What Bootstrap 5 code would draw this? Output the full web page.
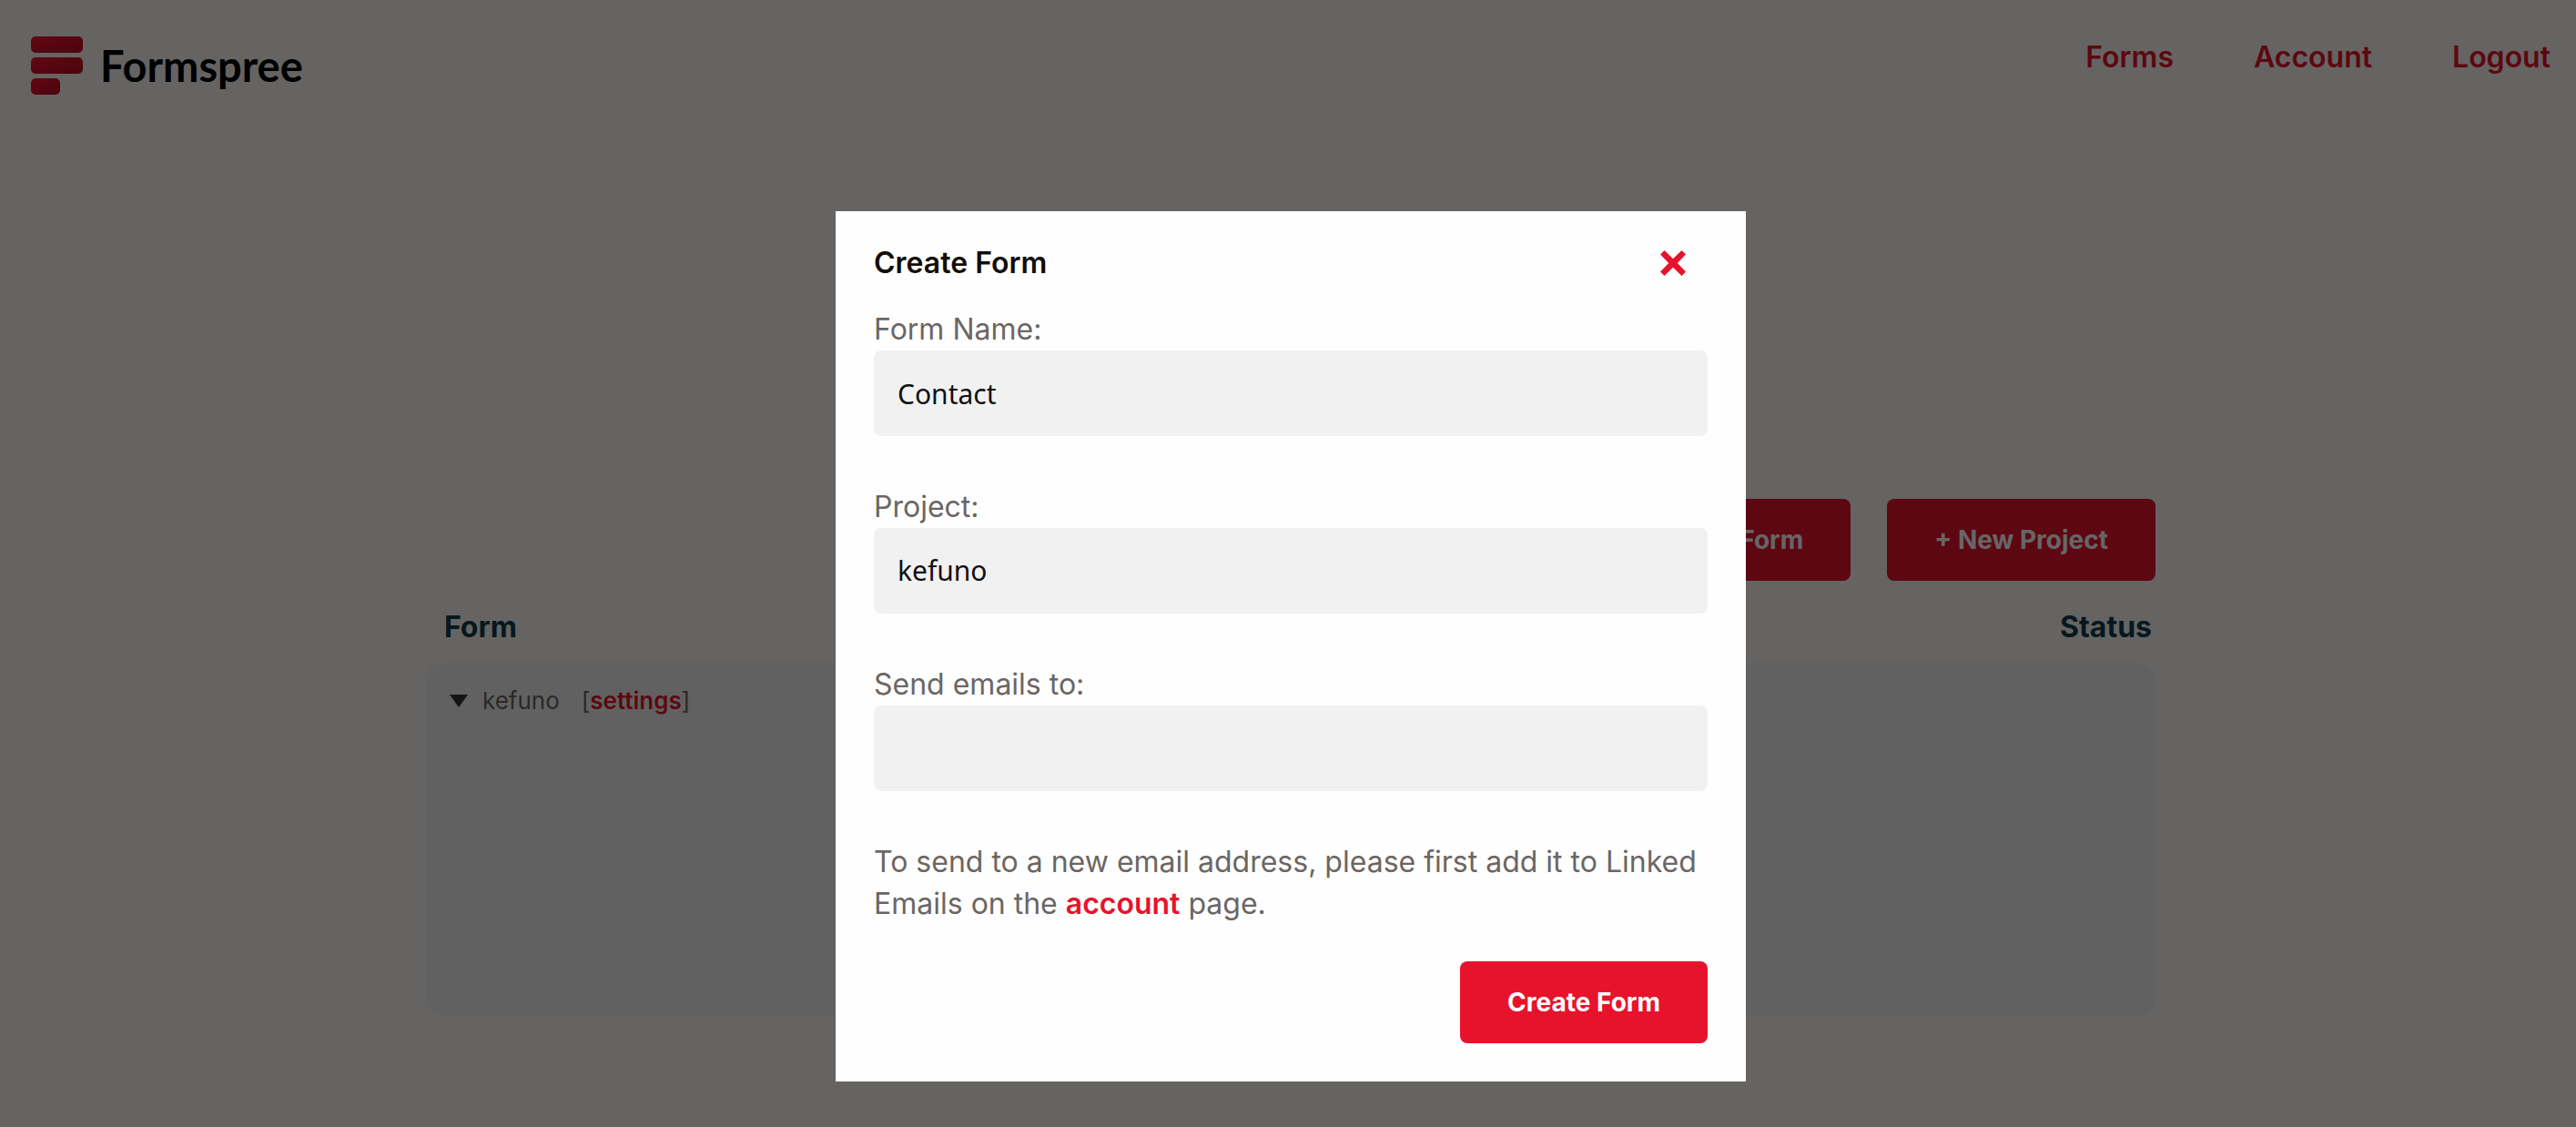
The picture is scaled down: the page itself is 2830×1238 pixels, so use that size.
<!DOCTYPE html>
<html lang="en">
<head>
<meta charset="utf-8">
<meta name="viewport" content="width=device-width, initial-scale=1">
<title>Formspree</title>
<link rel="stylesheet" href="https://cdn.jsdelivr.net/npm/bootstrap@5.3.0/dist/css/bootstrap.min.css">
<style>
  :root { --brand: #e7132c; --ink: #6b6663; }
  body { background: #fcfbf5; color: var(--ink); font-family: Inter, "Liberation Sans", sans-serif; font-size: 32px; line-height: 46px; overflow: hidden; }
  a { color: var(--brand); font-weight: 600; text-decoration: none; }
  .site-header { padding: 40px 28px 0 34px; }
  .wordmark { font-family: Lato, sans-serif; font-weight: 700; font-size: 47px; line-height: 64px; color: #000; gap: 19px; }
  .site-links { gap: 88px; }
  .page-main { max-width: 1900px; margin: 444px auto 0; }
  .page-shell, .modal-shell { padding-left: 6px; }
  .btn-row { gap: 40px; }
  .btn-brand { background: var(--brand); color: #fff; border: 0; border-radius: 8px; font-weight: 700; font-size: 28px; line-height: 42px; padding: 24px 52px; }
  .btn-brand:hover { background: #c81025; color: #fff; }
  .form-heads { color: #0f3d4c; font-weight: 700; padding: 28px 4px 16px 20px; }
  .form-panel { background: #f3f3f3; border-radius: 20px; min-height: 388px; padding: 22px 26px; font-size: 26px; line-height: 40px; }
  .modal-shell { color: var(--ink); }
  .modal-shell .modal-dialog { max-width: 1000px; margin: 232px auto 0; }
  .modal-shell .modal-content { border: 0; border-radius: 0; background: #fefefe; padding: 34px 42px 42px; }
  .modal-backdrop { --bs-backdrop-opacity: .6; width: 100%; height: 100%; }
  .dialog-title { font-size: 32px; font-weight: 600; line-height: 46px; color: #120d08; }
  .dialog-head { padding-right: 24px; margin-bottom: 27px; }
  .field-label { display: block; line-height: 46px; }
  .field-box { background: #f1f1f1; border: 0; border-radius: 8px; height: 94px; padding: 0 26px; margin-bottom: 55px; color: #111; font-family: "Noto Sans", sans-serif; font-size: 30px; line-height: 44px; appearance: none; }
  .field-box:focus { background: #f1f1f1; }
  .help-text { margin-bottom: 40px; }
</style>
<script src="https://cdn.jsdelivr.net/npm/bootstrap@5.3.0/dist/js/bootstrap.bundle.min.js"></script>
</head>
<body>
<header class="site-header d-flex justify-content-between align-items-start">
  <a class="wordmark d-flex align-items-center" href="#">
    <svg width="57" height="64" viewBox="0 0 57 64" aria-hidden="true">
      <defs><linearGradient id="bar" x1="0" y1="0" x2="1" y2="1"><stop offset="0" stop-color="#f5142f"/><stop offset="1" stop-color="#bd0a22"/></linearGradient></defs>
      <rect width="57" height="18" rx="5" fill="url(#bar)"/>
      <rect y="23" width="57" height="18" rx="5" fill="url(#bar)"/>
      <rect y="46" width="32" height="18" rx="5" fill="url(#bar)"/>
    </svg>
    <span>Formspree</span>
  </a>
  <nav class="site-links d-flex"><a href="#">Forms</a><a href="#">Account</a><a href="#">Logout</a></nav>
</header>
<div class="page-shell">
  <main class="page-main">
    <div class="btn-row d-flex justify-content-end">
      <button class="btn btn-brand" type="button">+ New Form</button>
      <button class="btn btn-brand" type="button">+ New Project</button>
    </div>
    <div class="form-heads d-flex justify-content-between"><span>Form</span><span>Status</span></div>
    <section class="form-panel">
      <div class="d-flex align-items-center">
        <svg width="20" height="14" viewBox="0 0 20 14" class="me-3" aria-hidden="true"><path d="M0 0h20L10 14z" fill="#333"/></svg>
        <span class="me-4">kefuno</span>
        <span>[<a href="#">settings</a>]</span>
      </div>
    </section>
  </main>
</div>
<div class="modal-backdrop show"></div>
<div class="modal modal-shell show d-block" role="dialog" aria-modal="true" aria-labelledby="dlg">
  <div class="modal-dialog">
    <form class="modal-content">
      <div class="dialog-head d-flex justify-content-between align-items-center">
        <h1 class="dialog-title mb-0" id="dlg">Create Form</h1>
        <button type="button" class="btn p-0 border-0 d-flex" aria-label="Close">
          <svg width="28" height="28" viewBox="0 0 28 28"><path d="M4.500 0 14 9.200 23.500 0 28 4.500 18.800 14 28 23.500 23.500 28 14 18.800 4.500 28 0 23.500 9.200 14 0 4.500z" fill="#e7132c"/></svg>
        </button>
      </div>
      <label class="field-label" for="name">Form Name:</label>
      <input class="form-control field-box" id="name" type="text" value="Contact">
      <label class="field-label" for="project">Project:</label>
      <select class="form-control field-box" id="project"><option>kefuno</option></select>
      <label class="field-label" for="email">Send emails to:</label>
      <select class="form-control field-box" id="email"></select>
      <p class="help-text">To send to a new email address, please first add it to Linked Emails on the <a href="#">account</a> page.</p>
      <button class="btn btn-brand align-self-end" type="submit">Create Form</button>
    </form>
  </div>
</div>
</body>
</html>
